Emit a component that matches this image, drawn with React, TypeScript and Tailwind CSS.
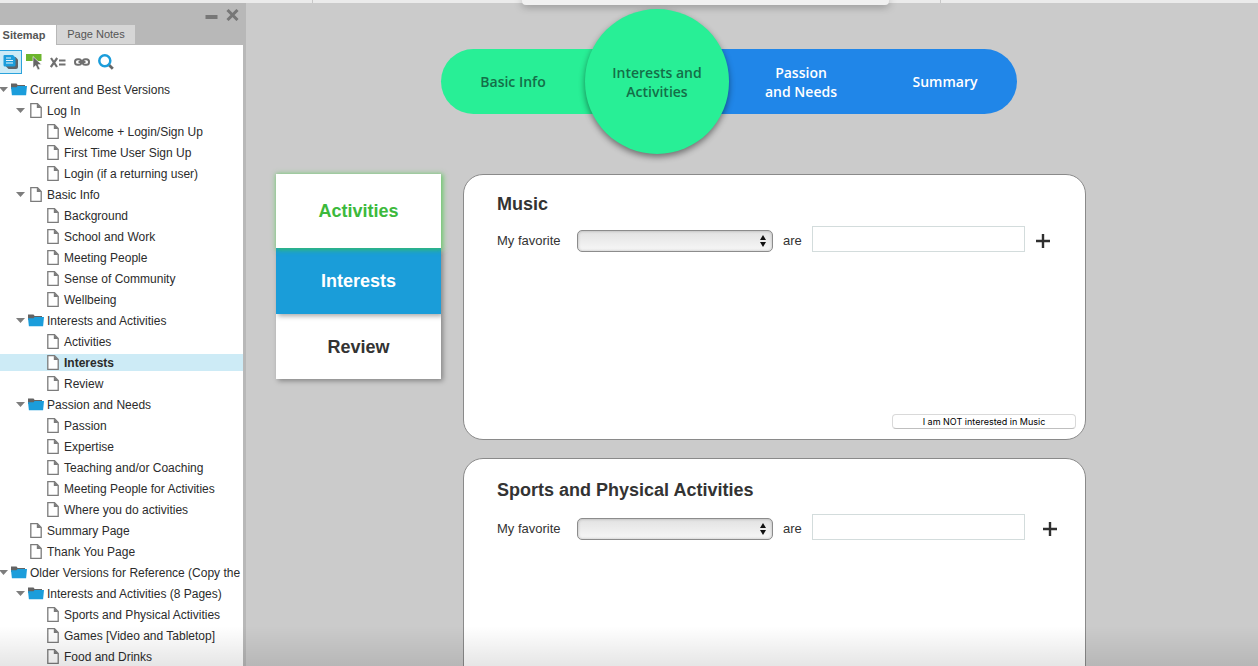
import React from "react";

type Kind = "folder" | "page";
type Node = { label: string; depth: 0 | 1 | 2; kind: Kind; open?: boolean; selected?: boolean };

const nodes: Node[] = [
  { label: "Current and Best Versions", depth: 0, kind: "folder", open: true },
  { label: "Log In", depth: 1, kind: "page", open: true },
  { label: "Welcome + Login/Sign Up", depth: 2, kind: "page" },
  { label: "First Time User Sign Up", depth: 2, kind: "page" },
  { label: "Login (if a returning user)", depth: 2, kind: "page" },
  { label: "Basic Info", depth: 1, kind: "page", open: true },
  { label: "Background", depth: 2, kind: "page" },
  { label: "School and Work", depth: 2, kind: "page" },
  { label: "Meeting People", depth: 2, kind: "page" },
  { label: "Sense of Community", depth: 2, kind: "page" },
  { label: "Wellbeing", depth: 2, kind: "page" },
  { label: "Interests and Activities", depth: 1, kind: "folder", open: true },
  { label: "Activities", depth: 2, kind: "page" },
  { label: "Interests", depth: 2, kind: "page", selected: true },
  { label: "Review", depth: 2, kind: "page" },
  { label: "Passion and Needs", depth: 1, kind: "folder", open: true },
  { label: "Passion", depth: 2, kind: "page" },
  { label: "Expertise", depth: 2, kind: "page" },
  { label: "Teaching and/or Coaching", depth: 2, kind: "page" },
  { label: "Meeting People for Activities", depth: 2, kind: "page" },
  { label: "Where you do activities", depth: 2, kind: "page" },
  { label: "Summary Page", depth: 1, kind: "page" },
  { label: "Thank You Page", depth: 1, kind: "page" },
  { label: "Older Versions for Reference (Copy the", depth: 0, kind: "folder", open: true },
  { label: "Interests and Activities (8 Pages)", depth: 1, kind: "folder", open: true },
  { label: "Sports and Physical Activities", depth: 2, kind: "page" },
  { label: "Games [Video and Tabletop]", depth: 2, kind: "page" },
  { label: "Food and Drinks", depth: 2, kind: "page" },
];

const indent = { 0: "pl-0", 1: "pl-[17px]", 2: "pl-[34px]" };

function FolderIcon() {
  return (
    <svg width="16" height="14" viewBox="0 0 16 14" aria-hidden="true">
      <path d="M0 .5h5.500l1.200 1.400H14V6H0z" fill="#636363" />
      <path d="M0 4.200h5.600l.9-1.200H16l-.9 9.300H.9z" fill="#1b9ddb" />
    </svg>
  );
}

function PageIcon() {
  return (
    <svg width="12" height="15" viewBox="0 0 12 15" aria-hidden="true">
      <path d="M.8.7h6.700l3.700 3.800v9.800H.8z" fill="#fff" stroke="#7b7b7b" strokeWidth="1.300" />
      <path d="M6.800.5v4.600h4.600z" fill="#7b7b7b" />
    </svg>
  );
}

function TreeRow({ node }: { node: Node }) {
  return (
    <li className="flex h-[21px] items-center">
      <a
        href="#"
        aria-current={node.selected ? "page" : undefined}
        className={`flex h-[17px] w-full items-center whitespace-nowrap ${indent[node.depth]} ${
          node.selected ? "bg-[#cdebf6] font-bold" : ""
        }`}
      >
        <span className="flex w-[11px] shrink-0">
          {node.open && (
            <svg width="9" height="5" viewBox="0 0 9 5" className="-ml-px" aria-hidden="true">
              <path d="M0 0h9L4.500 5z" fill="#7d7d7d" />
            </svg>
          )}
        </span>
        <span className="mr-[3px] flex w-4 shrink-0 justify-center">
          {node.kind === "folder" ? <FolderIcon /> : <PageIcon />}
        </span>
        {node.label}
      </a>
    </li>
  );
}

function Toolbar() {
  return (
    <div className="flex h-[34px] shrink-0 items-center gap-1">
      <button aria-label="Sitemap" className="flex h-6 w-[22px] items-center justify-center border border-l-0 border-[#2ba3dc] bg-[#cdebf6]">
        <svg width="16" height="16" viewBox="0 0 16 16">
          <path d="M4 3h8.500L15 5.500V13a2 2 0 0 1-2 2H5.500L3 12.500z" fill="#5f6468" />
          <path d="M1.500 1H10l2.500 2.500V11a1.500 1.500 0 0 1-1.500 1.500H2A1.500 1.500 0 0 1 .5 11V2a1 1 0 0 1 1-1z" fill="#1b9ddb" />
          <path d="M3 4h5M3 6.500h7M3 9h7" stroke="#e8f6fc" strokeWidth="1.200" />
        </svg>
      </button>
      <button aria-label="Highlight interactive elements" className="flex h-6 w-4 items-center">
        <svg width="16" height="16" viewBox="0 0 16 16">
          <path d="M0 0h15.500v7H0z" fill="#6cb52d" />
          <path d="M7 2.500 15.500 10.500l-3.500.2 2 4.200-2.200 1-2-4.300L7 14z" fill="#666" stroke="#fff" strokeWidth=".6" />
        </svg>
      </button>
      <button aria-label="Variables" className="ml-1 flex h-6 w-4 items-center">
        <svg width="16" height="12" viewBox="0 0 16 12" fill="none" stroke="#707070">
          <path d="M1 2 7 11M7.200 2 .8 11" strokeWidth="2.200" />
          <path d="M9 4.500h6.500M9 8.500h6.500" strokeWidth="2" />
        </svg>
      </button>
      <button aria-label="Link" className="ml-1 flex h-6 w-4 items-center">
        <svg width="16" height="8" viewBox="0 0 16 8" fill="none" stroke="#707070" strokeWidth="2">
          <rect x="1" y="1.200" width="6.300" height="5.600" rx="2.600" />
          <rect x="8.700" y="1.200" width="6.300" height="5.600" rx="2.600" />
          <path d="M4.500 4h7" />
        </svg>
      </button>
      <button aria-label="Search" className="ml-1 flex h-6 w-4 items-center">
        <svg width="16" height="16" viewBox="0 0 16 16" fill="none">
          <path d="m10.500 10.500 4.300 4.300" stroke="#666" strokeWidth="2.800" />
          <circle cx="6.800" cy="6.800" r="5.500" stroke="#1b9ddb" strokeWidth="2.500" fill="#fff" />
        </svg>
      </button>
    </div>
  );
}

function Sidebar() {
  return (
    <aside className="flex w-[246px] shrink-0 flex-col overflow-hidden border-r-[3px] border-[#b8b8b8] bg-white text-[12px] text-[#2b2b2b]">
      <div className="shrink-0 bg-[#b8b8b8]">
        <div className="flex h-[22px] items-end justify-end gap-2 pr-1 pb-1">
          <button aria-label="Minimize">
            <svg width="13" height="12" viewBox="0 0 13 12">
              <path d="M.500 6h12v4H.500z" fill="#777" />
            </svg>
          </button>
          <button aria-label="Close">
            <svg width="13" height="12" viewBox="0 0 13 12">
              <path d="m1.500 1 10 10m0-10-10 10" stroke="#777" strokeWidth="3" />
            </svg>
          </button>
        </div>
        <div className="flex h-5 text-[11px]">
          <button className="w-14 bg-white pr-2 font-bold text-[#555]">Sitemap</button>
          <button className="ml-px h-[19px] w-[78px] bg-[#d6d6d6] text-[#555]">Page Notes</button>
        </div>
      </div>
      <Toolbar />
      <ul className="shrink-0">
        {nodes.map((n, i) => (
          <TreeRow key={i} node={n} />
        ))}
      </ul>
    </aside>
  );
}

function Steps() {
  return (
    <nav className="ml-[165px] flex h-[145px] w-[576px] items-center text-center font-['Open_Sans','Noto_Sans',sans-serif] text-[14px] leading-[19px] font-semibold">
      <a href="#" className="-mr-9 flex h-[65px] w-[180px] items-center justify-center rounded-l-full bg-[#28ef96] pr-9 text-[#146e48]">
        Basic Info
      </a>
      <a
        href="#"
        aria-current="step"
        className="z-10 flex h-[145px] w-36 shrink-0 items-center justify-center rounded-full bg-[#28ef96] px-4 text-[#146e48] shadow-[0_3px_6px_rgba(0,0,0,0.45)]"
      >
        Interests and Activities
      </a>
      <a href="#" className="-ml-9 flex h-[65px] w-[180px] items-center justify-center bg-[#2086e8] pl-9 text-white">
        <span>
          Passion
          <br />
          and Needs
        </span>
      </a>
      <a href="#" className="flex h-[65px] w-36 items-center justify-center rounded-r-full bg-[#2086e8] text-white">
        Summary
      </a>
    </nav>
  );
}

function SectionTabs() {
  return (
    <nav className="flex w-[165px] shrink-0 flex-col self-start text-[18px] leading-6 font-bold text-[#333]">
      <a href="#" className="z-20 flex h-[74px] items-center justify-center bg-white text-[#3cb93c] shadow-[1px_1px_5px_1px_rgba(60,200,60,0.7)]">
        Activities
      </a>
      <a href="#" aria-current="page" className="z-10 flex h-[66px] items-center justify-center bg-[#1a9dd9] text-white shadow-[2px_2px_5px_rgba(0,0,0,0.35)]">
        Interests
      </a>
      <a href="#" className="flex h-[65px] items-center justify-center bg-white shadow-[2px_2px_5px_rgba(0,0,0,0.35)]">
        Review
      </a>
    </nav>
  );
}

type CardProps = { id: string; title: string; roomy?: boolean; optOut?: string };

function InterestCard({ id, title, roomy, optOut }: CardProps) {
  return (
    <section
      className={`flex min-h-[266px] flex-col rounded-[20px] border border-[#8a8a8a] bg-white text-[13px] text-[#333] ${
        roomy ? "gap-3 pt-[19px]" : "gap-[10px] pt-[17px]"
      }`}
    >
      <h2 className="pl-[33px] text-[18px] leading-6 font-bold">{title}</h2>
      <div className="flex items-end pl-[33px] leading-[22px]">
        <label htmlFor={`${id}-kind`} className="w-20">
          My favorite
        </label>
        <div className="relative flex">
          <select
            id={`${id}-kind`}
            className="h-[22px] w-[196px] appearance-none rounded-[5px] border border-[#8c8c8c] bg-linear-to-b from-[#e2e2e2] to-[#f7f7f7] shadow-[inset_0_0_3px_rgba(0,0,0,0.25)]"
          >
            <option></option>
          </select>
          <svg width="6" height="12" viewBox="0 0 6 12" className="pointer-events-none absolute top-[5px] right-[7px]" aria-hidden="true">
            <path d="M3 0l3 5H0zM3 12l3-5H0z" fill="#111" />
          </svg>
        </div>
        <label htmlFor={`${id}-value`} className="mx-[10px] w-[19px]">
          are
        </label>
        <input id={`${id}-value`} type="text" className="h-[26px] w-[213px] border border-[#d3dcdc] bg-white px-1" />
        <button aria-label="Add" className={`flex h-[22px] items-center ${roomy ? "ml-[18px]" : "ml-[11px]"}`}>
          <svg width="14" height="14" viewBox="0 0 14 14">
            <path d="M0 7h14M7 0v14" stroke="#2f2f2f" strokeWidth="2.400" />
          </svg>
        </button>
      </div>
      {optOut && (
        <button className="mt-auto mr-[9px] mb-[10px] h-[15px] w-[184px] self-end rounded border border-[#d9d9d9] border-b-[#bfbfbf] bg-white font-['Inter',sans-serif] text-[9px] leading-[13px] text-black">
          {optOut}
        </button>
      )}
    </section>
  );
}

export default function App() {
  return (
    <div className="relative flex h-screen flex-col overflow-hidden bg-[#cbcbcb] font-['Liberation_Sans',Arial,sans-serif]">
      <div className="flex h-[3px] shrink-0 bg-[#ebebeb]">
        <div className="w-[313px] border-r border-[#c8c8c8]" />
        <div className="w-[628px] border-r border-[#c8c8c8]" />
      </div>
      <div className="absolute top-0 left-[522px] h-[5px] w-[367px] rounded-b bg-[#f1f1f1] shadow-[0_1px_8px_rgba(0,0,0,0.4)]" />
      <div className="flex min-h-0 flex-1">
        <Sidebar />
        <main className="flex-1 overflow-hidden pt-[6px] pl-[30px]">
          <Steps />
          <div className="mt-5 flex gap-[22px]">
            <SectionTabs />
            <div className="flex w-[623px] flex-col gap-[18px]">
              <InterestCard id="music" title="Music" optOut="I am NOT interested in Music" />
              <InterestCard id="sports" title="Sports and Physical Activities" roomy />
            </div>
          </div>
        </main>
      </div>
      <div className="pointer-events-none absolute inset-x-0 bottom-0 h-10 bg-linear-to-t from-black/10 to-transparent" />
    </div>
  );
}
